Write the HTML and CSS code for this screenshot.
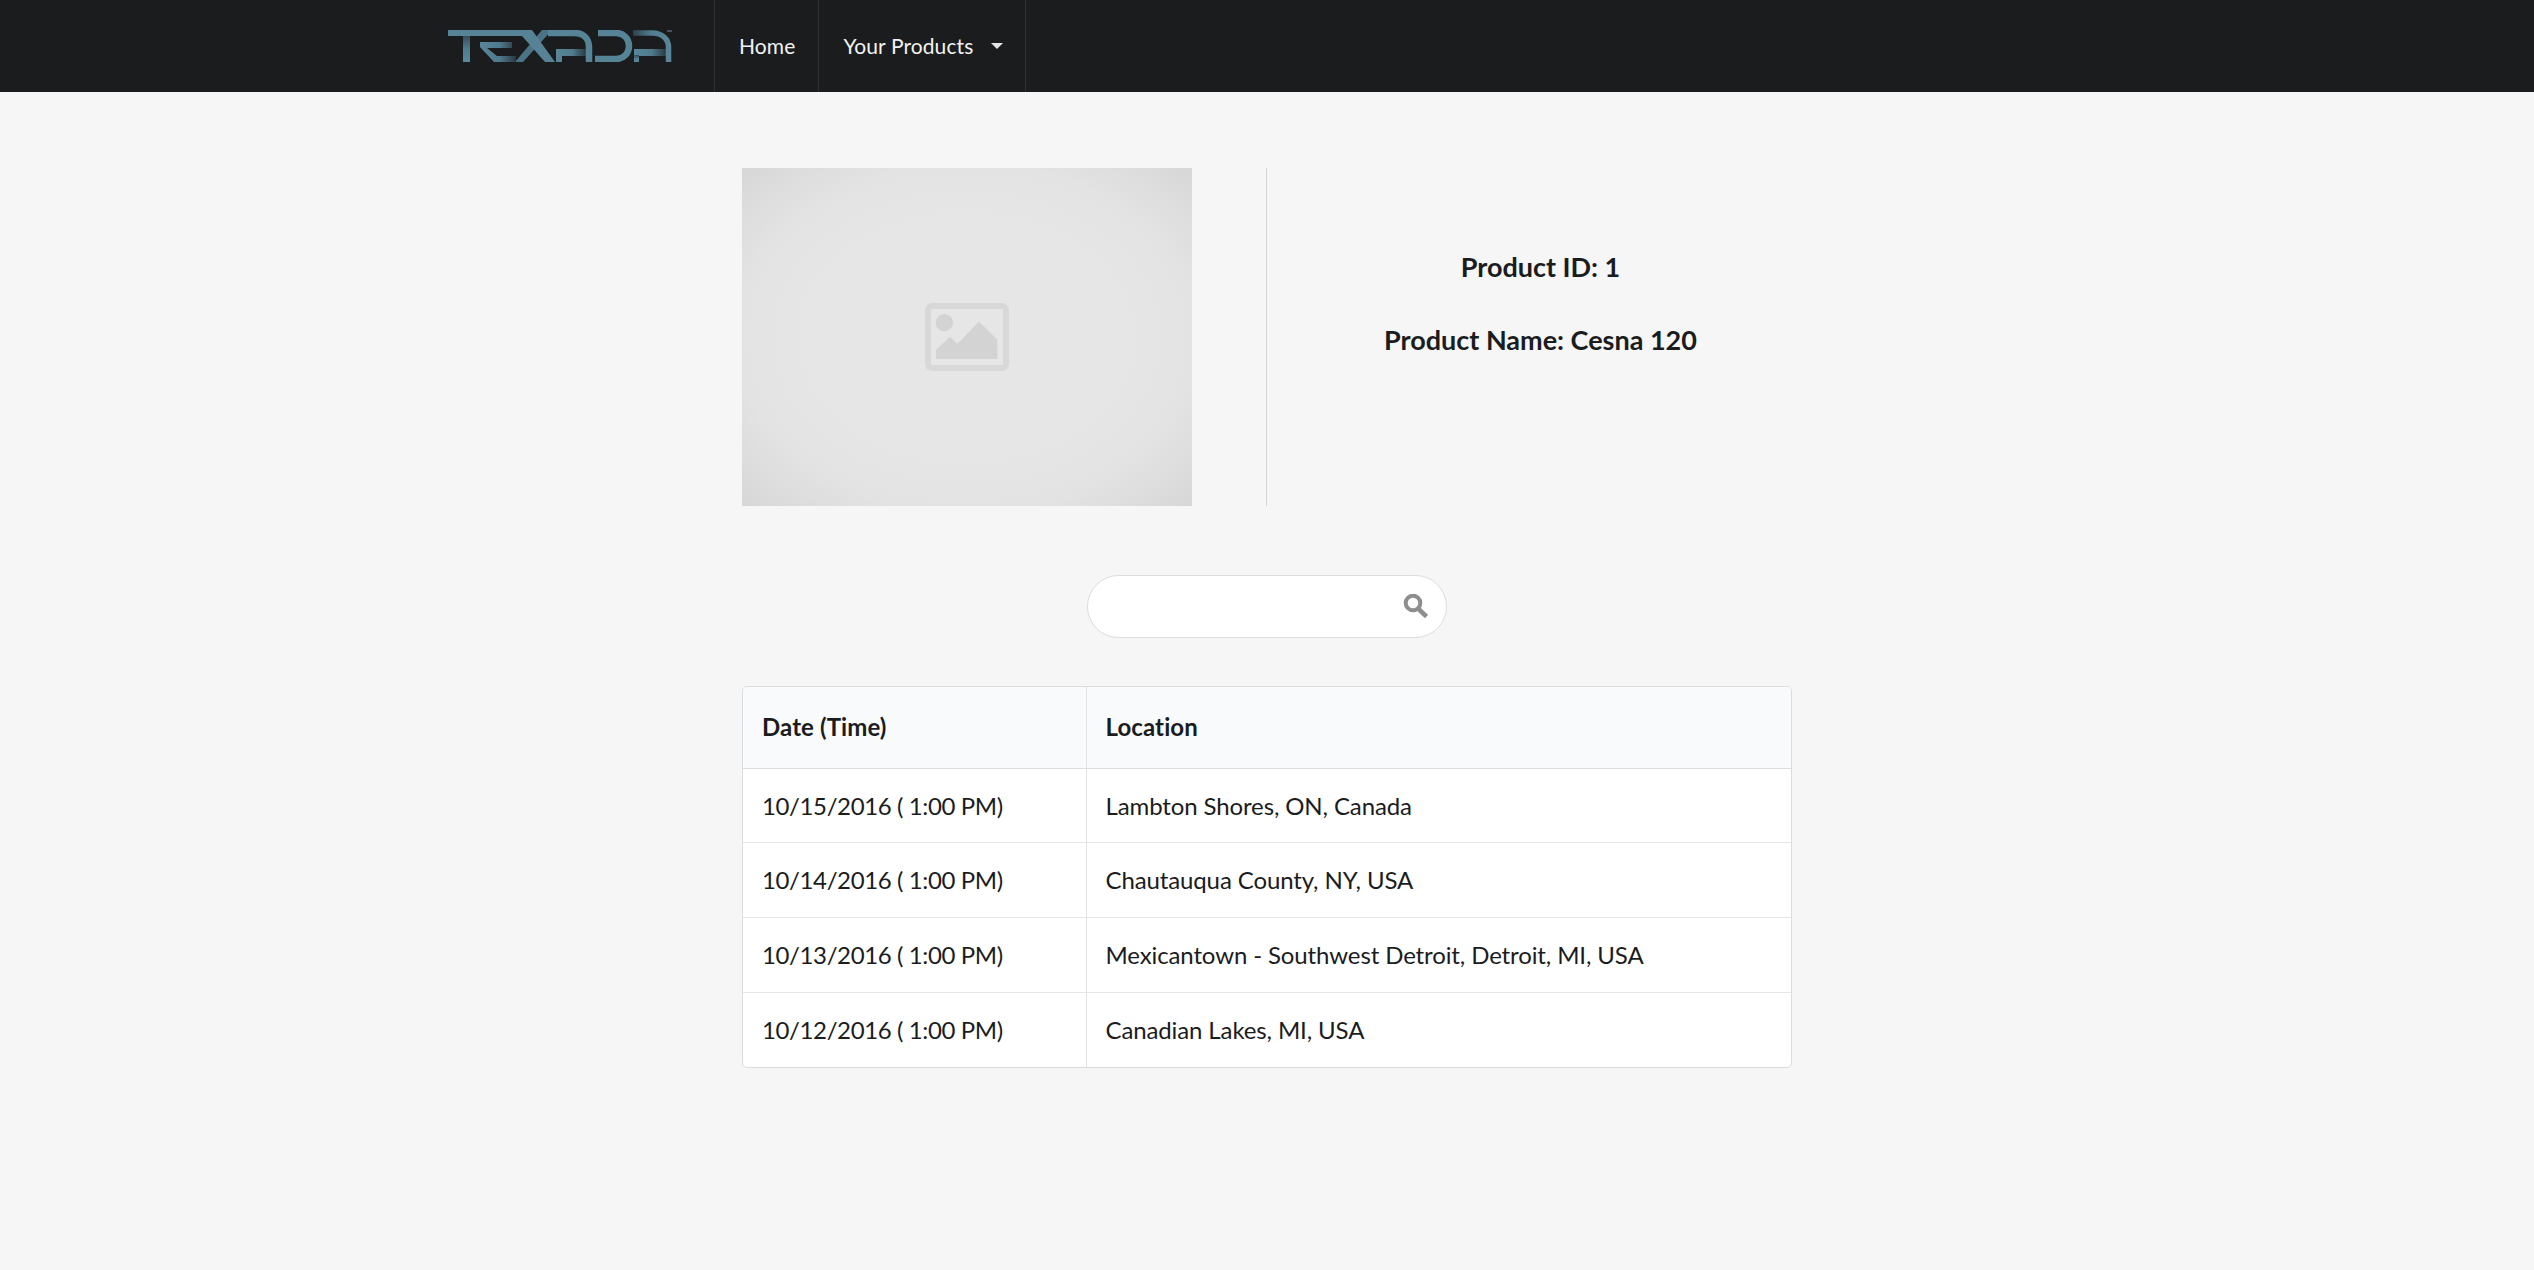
FILE: index.html
```html
<!DOCTYPE html>
<html lang="en">
<head>
<meta charset="utf-8">
<title>Texada</title>
<link rel="stylesheet" href="styles.css">
</head>
<body>
<header class="navbar">
  <a class="brand" href="#">
    <svg class="logo" width="224" height="32" viewBox="0 0 224 32" aria-label="Texada">
      <defs>
        <linearGradient id="fadeRight" x1="0" x2="1" y1="0" y2="0">
          <stop offset="0" stop-color="#588698"/>
          <stop offset="0.55" stop-color="#4f7a8c"/>
          <stop offset="1" stop-color="#2a3a42"/>
        </linearGradient>
        <linearGradient id="fadeLeft" x1="0" x2="1" y1="0" y2="0">
          <stop offset="0" stop-color="#2f434c"/>
          <stop offset="0.5" stop-color="#4f7c8e"/>
          <stop offset="1" stop-color="#588698"/>
        </linearGradient>
        <linearGradient id="fadeTop" x1="0" x2="0" y1="0" y2="1">
          <stop offset="0" stop-color="#34495a"/>
          <stop offset="0.5" stop-color="#4f7c8e"/>
          <stop offset="1" stop-color="#5a8a9c"/>
        </linearGradient>
      </defs>
      <g fill="#568496">
        <rect x="15" y="5" width="7" height="27" fill="url(#fadeTop)"/>
        <path d="M94 0H104L75 32H67Z" fill="#4a7486"/>
        <path d="M0 0H84L107 32H97L74 6H0Z"/>
        <path d="M32 12H64V18H39L49 26H68V32H46L32 17Z" fill="url(#fadeRight)"/>
        <rect x="108" y="19" width="30" height="7" fill="url(#fadeRight)"/>
        <rect x="108" y="25" width="6" height="7"/>
        <rect x="186" y="19" width="32" height="7" fill="url(#fadeRight)"/>
        <rect x="186" y="25" width="5" height="7" fill="url(#fadeTop)"/>
      </g>
      <g fill="none" stroke-width="6.5">
        <path d="M100 3H126C136 3 141 9 141 17V32" stroke="#568496"/>
        <path d="M147 29H168C176 29 181 23 181 16C181 9 176 3 168 3H150" stroke="#568496"/>
        <path d="M185 3H204C214 3 220.500 9 220.500 17V32" stroke="url(#fadeLeft)" stroke-width="5.500"/>
      </g>
      <rect x="219" y="0" width="5" height="2" fill="#47555c"/>
    </svg>
  </a>
  <nav class="nav">
    <a class="nav-item nav-home" href="#">Home</a>
    <a class="nav-item nav-products" href="#">Your Products<span class="caret"></span></a>
  </nav>
</header>
<main class="page">
  <section class="product">
    <div class="photo">
      <svg width="84" height="68" viewBox="0 0 84 68">
        <rect x="3" y="3" width="78" height="62" rx="4" fill="none" stroke="#d8d8d8" stroke-width="6"/>
        <circle cx="19.300" cy="19.700" r="8.700" fill="#d3d3d3"/>
        <path d="M11 56V47L25 33.700L32.300 41L54 18.700L72.300 36.700V56Z" fill="#d3d3d3"/>
      </svg>
    </div>
    <div class="divider"></div>
    <div class="info">
      <h2 class="info-line">Product ID: 1</h2>
      <h2 class="info-line">Product Name: Cesna 120</h2>
    </div>
  </section>
  <div class="search">
    <input class="search-input" type="text" aria-label="Search">
    <svg class="search-icon" width="25" height="25" viewBox="0 0 25 25">
      <circle cx="10" cy="9" r="7.300" fill="none" stroke="#8e8e8e" stroke-width="4"/>
      <path d="M15 14.500L23.500 22.500" stroke="#8e8e8e" stroke-width="4.500"/>
    </svg>
  </div>
  <div class="table-wrap">
    <table class="table">
      <thead>
        <tr><th class="col-date">Date (Time)</th><th>Location</th></tr>
      </thead>
      <tbody>
        <tr><td class="cell-date">10/15/2016 ( 1:00 PM)</td><td>Lambton Shores, ON, Canada</td></tr>
        <tr><td class="cell-date">10/14/2016 ( 1:00 PM)</td><td>Chautauqua County, NY, USA</td></tr>
        <tr><td class="cell-date">10/13/2016 ( 1:00 PM)</td><td>Mexicantown - Southwest Detroit, Detroit, MI, USA</td></tr>
        <tr><td class="cell-date">10/12/2016 ( 1:00 PM)</td><td>Canadian Lakes, MI, USA</td></tr>
      </tbody>
    </table>
  </div>
</main>
</body>
</html>
```
FILE: styles.css
```css
* { box-sizing: border-box; }
html, body { margin: 0; height: 100%; }
body {
  background: #f6f6f6;
  color: #1b1c1d;
  font-family: Lato, "Open Sans", sans-serif;
  font-size: 24px;
}
.navbar {
  height: 92px;
  background: #1b1c1d;
  display: flex;
  align-items: stretch;
  padding-left: 448px;
}
.brand { width: 266px; display: flex; align-items: flex-start; padding-top: 30px; }
.logo { display: block; }
.nav { display: flex; border-left: 1px solid #2f3031; }
.nav-item {
  display: flex;
  align-items: center;
  padding-bottom: 2px;
  color: #f2f2f2;
  font-size: 21px;
  letter-spacing: 0.1px;
  text-decoration: none;
  border-right: 1px solid #2f3031;
}
.nav-home { padding-left: 24px; padding-right: 23px; }
.nav-products { padding-left: 24px; padding-right: 22px; }
.caret {
  margin-left: 18px;
  margin-top: 2px;
  width: 0;
  height: 0;
  border-left: 6px solid transparent;
  border-right: 6px solid transparent;
  border-top: 6px solid #e6e6e6;
}
.page { width: 1050px; margin: 0 auto; padding-top: 76px; }
.product { display: flex; height: 338px; }
.photo {
  width: 450px;
  height: 338px;
  display: flex;
  align-items: center;
  justify-content: center;
  background: radial-gradient(ellipse farthest-corner at center, #e6e6e6 45%, #e3e3e3 72%, #d7d7d7 100%);
}
.divider { width: 1px; margin-left: 74px; background: #d4d4d5; }
.info { flex: 1; text-align: center; padding: 85px 0 0 22px; }
.info-line { margin: 0 0 45px; font-size: 27px; font-weight: 700; line-height: 28px; }
.search { position: relative; width: 360px; height: 63px; margin: 69px auto 48px; }
.search-input {
  width: 100%;
  height: 100%;
  background: #fff;
  border: 1px solid #dcdcdd;
  border-radius: 32px;
  outline: none;
}
.search-icon { position: absolute; right: 19px; top: 19px; }
.table-wrap { background: #fff; border: 1px solid #dcdcdd; border-radius: 5px; overflow: hidden; }
.table { width: 100%; border-collapse: collapse; }
.table th {
  height: 81px;
  padding: 0 19px 1px;
  background: #f9fafb;
  font-weight: 700;
  letter-spacing: 0.1px;
  text-align: left;
  border-bottom: 1px solid #dedede;
}
.table td {
  height: 75px;
  padding: 0 19px;
  border-top: 1px solid #e6e6e6;
  letter-spacing: -0.12px;
}
.table td.cell-date { letter-spacing: -0.38px; }
.table tbody tr:first-child td { border-top: 0; height: 74px; }
.table th + th, .table td + td { border-left: 1px solid #e3e3e3; }
.col-date { width: 343px; }
```
